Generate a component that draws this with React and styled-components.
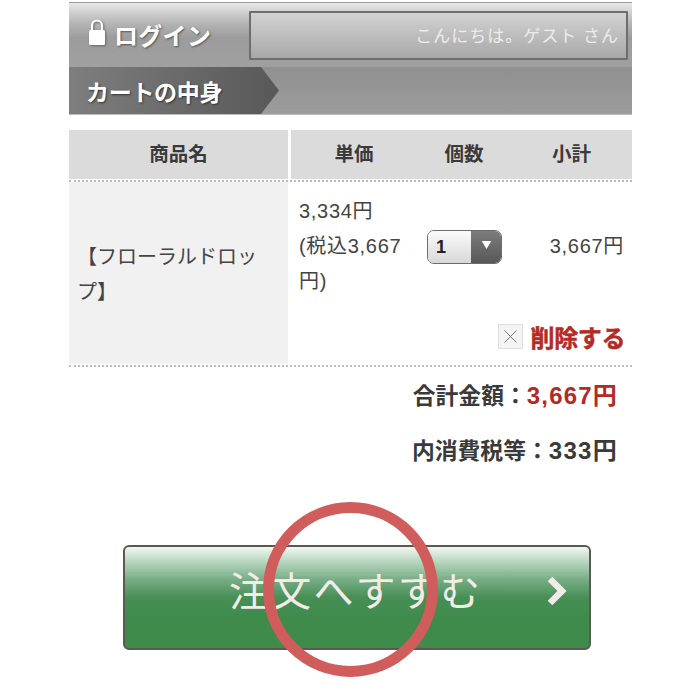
import React from "react";
import styled, { createGlobalStyle } from "styled-components";

const FONT = `"Liberation Sans", "Noto Sans CJK JP", sans-serif`;

const Global = createGlobalStyle`
  html, body { margin: 0; padding: 0; background: #fff; }
  body { font-family: ${FONT}; color: #3c3c3c; }
`;

const Page = styled.div`
  position: relative;
  width: 700px;
  height: 700px;
  overflow: hidden;
  padding: 2px 68px 0 69px;
  box-sizing: border-box;
`;

const LoginBar = styled.div`
  height: 65px;
  box-sizing: border-box;
  border-top: 1px solid #9a9a9a;
  background: linear-gradient(#e8e8e8 0%, #b4b4b4 32%, #9c9c9c 55%, #a0a0a0 100%);
  display: flex;
  align-items: flex-start;
  padding: 8px 4px 0 19px;
`;

const LoginLabel = styled.div`
  display: flex;
  align-items: center;
  gap: 8px;
  width: 161px;
  height: 46px;
  color: #fff;
  font-size: 24px;
  font-weight: 700;
  text-shadow: 1px 1px 2px #555;
  letter-spacing: 0.3px;
`;

const LockIcon = styled.svg`
  margin-top: -4px;
  filter: drop-shadow(1px 1px 1px #666);
`;

const Greeting = styled.div`
  flex: 1;
  height: 49px;
  box-sizing: border-box;
  border: 2px solid #6e6e6e;
  border-radius: 1px;
  background: linear-gradient(#d2d2d2, #a8a8a8);
  display: flex;
  align-items: center;
  justify-content: flex-end;
  padding: 0 7px 2px 0;
  color: #ececec;
  font-size: 17px;
  letter-spacing: 1px;
`;

const CrumbBar = styled.div`
  height: 48px;
  background: linear-gradient(#909090, #9c9c9c);
  border-bottom: 1px solid #bdbdbd;
  box-sizing: border-box;
`;

const Crumb = styled.div`
  width: 210px;
  height: 47px;
  box-sizing: border-box;
  padding-left: 17px;
  display: flex;
  align-items: center;
  color: #fff;
  font-size: 23px;
  font-weight: 700;
  letter-spacing: -0.3px;
  text-shadow: 1px 1px 2px #333;
  background: linear-gradient(90deg, #7e7e7e 0%, #585858 100%);
  clip-path: polygon(0 0, 192px 0, 100% 50%, 192px 100%, 0 100%);
`;

const Table = styled.div`
  margin-top: 15px;
  display: grid;
  grid-template-columns: 219px 3px 126px 94px 121px;
`;

const HeadCell = styled.div`
  height: 49px;
  box-sizing: border-box;
  padding-bottom: 4px;
  background: #dcdbdb;
  display: flex;
  align-items: center;
  justify-content: center;
  font-size: 19.5px;
  font-weight: 700;
  color: #3a3a3a;
`;

const HeadGap = styled.div`
  background: #fff;
`;

const Dots = styled.div`
  grid-column: 1 / -1;
  height: 3px;
  box-sizing: border-box;
  border-bottom: 2px dotted #bcbcbc;
`;

const NameCell = styled.div`
  grid-row: 3;
  grid-column: 1;
  height: 182px;
  background: #f1f1f1;
  box-sizing: border-box;
  padding: 58px 16px 0 8px;
  font-size: 20px;
  line-height: 35px;
  color: #444;
`;

const PriceCell = styled.div`
  grid-row: 3;
  grid-column: 3;
  box-sizing: border-box;
  padding: 12px 0 0 8px;
  font-size: 20px;
  letter-spacing: 0.7px;
  line-height: 35px;
  color: #444;
`;

const QtyCell = styled.div`
  grid-row: 3;
  grid-column: 4;
  padding: 48px 0 0 10px;
`;

const Select = styled.div`
  width: 75px;
  height: 34px;
  box-sizing: border-box;
  border: 1.5px solid #6c6c6c;
  border-radius: 7px;
  overflow: hidden;
  display: flex;
`;

const SelectValue = styled.div`
  flex: 1;
  background: linear-gradient(#fbfbfb, #d8d8d8);
  font-size: 18px;
  font-weight: 700;
  color: #222;
  display: flex;
  align-items: center;
  padding-left: 8px;
`;

const SelectArrow = styled.div`
  width: 30px;
  background: linear-gradient(#7c7c7c, #585858);
  display: flex;
  justify-content: center;
  padding-top: 9px;
  box-sizing: border-box;
`;

const TotalCell = styled.div`
  grid-row: 3;
  grid-column: 5;
  padding: 47px 8px 0 0;
  text-align: right;
  font-size: 20px;
  letter-spacing: 0.7px;
  line-height: 35px;
  color: #444;
`;

const RemoveRow = styled.div`
  grid-column: 3 / -1;
  grid-row: 3;
  align-self: end;
  justify-self: end;
  display: flex;
  align-items: center;
  gap: 8px;
  margin: 0 7px 10px 0;
  color: #b52a24;
  font-size: 24px;
  font-weight: 700;
  letter-spacing: -0.4px;
  -webkit-text-stroke: 0.5px #b52a24;
`;

const RemoveBox = styled.div`
  width: 25px;
  height: 25px;
  box-sizing: border-box;
  border: 1px solid #dedede;
  background: #f4f4f4;
  display: flex;
  align-items: center;
  justify-content: center;
`;

const Summary = styled.div`
  display: flex;
  flex-direction: column;
  align-items: flex-end;
  padding: 7px 14px 0 0;
`;

const SummaryLine = styled.div`
  height: 55px;
  line-height: 44px;
  font-size: 22.8px;
  font-weight: 700;
  color: #3a3a3a;
`;

const Amount = styled.span`
  color: ${(p) => (p.$red ? "#b52a24" : "#3a3a3a")};
  font-size: 24px;
  letter-spacing: ${(p) => (p.$red ? "1.2px" : "1.3px")};
`;

const OrderRow = styled.div`
  margin: 61px 0 0 54px;
  width: 468px;
`;

const OrderButton = styled.div`
  height: 105px;
  box-sizing: border-box;
  border: 2px solid #5a5a50;
  border-radius: 6px;
  background: linear-gradient(#f2f7f3 0%, #b9d7c1 14%, #77ae85 32%, #478f55 50%, #3e8b4c 70%, #3e8b4c 100%);
  display: flex;
  align-items: center;
  position: relative;
  padding: 0 0 17px 104px;
  color: #f3ebe8;
  font-size: 40px;
  letter-spacing: 2.2px;
  font-family: "Noto Sans CJK JP", sans-serif;
  font-weight: 400;
`;

const Chevron = styled.svg`
  position: absolute;
  right: 22px;
  top: 29px;
`;

const Ring = styled.div`
  position: absolute;
  left: 263px;
  top: 502px;
  width: 175px;
  height: 175px;
  box-sizing: border-box;
  border: 11px solid #d15c5c;
  border-radius: 50%;
`;

export default function App() {
  return (
    <Page>
      <Global />
      <LoginBar>
        <LoginLabel>
          <LockIcon width="18" height="27" viewBox="0 0 18 27">
            <path d="M4 13V6.5a5 5 0 0 1 10 0V13" fill="none" stroke="#fff" strokeWidth="2.2" />
            <rect x="1" y="11" width="16" height="15" rx="1.5" fill="#fff" />
          </LockIcon>
          ログイン
        </LoginLabel>
        <Greeting>こんにちは。ゲスト さん</Greeting>
      </LoginBar>
      <CrumbBar>
        <Crumb>カートの中身</Crumb>
      </CrumbBar>
      <Table>
        <HeadCell>商品名</HeadCell>
        <HeadGap />
        <HeadCell>単価</HeadCell>
        <HeadCell>個数</HeadCell>
        <HeadCell>小計</HeadCell>
        <Dots />
        <NameCell>【フローラルドロップ】</NameCell>
        <PriceCell>3,334円<br />(税込3,667円)</PriceCell>
        <QtyCell>
          <Select>
            <SelectValue>1</SelectValue>
            <SelectArrow>
              <svg width="11" height="10" viewBox="0 0 14 12">
                <path d="M1 1h12L7 11z" fill="#fff" />
              </svg>
            </SelectArrow>
          </Select>
        </QtyCell>
        <TotalCell>3,667円</TotalCell>
        <RemoveRow>
          <RemoveBox>
            <svg width="15" height="15" viewBox="0 0 15 15">
              <path d="M1.5 1.5l12 12M13.5 1.5l-12 12" stroke="#777" strokeWidth="1" fill="none" />
            </svg>
          </RemoveBox>
          削除する
        </RemoveRow>
        <Dots />
      </Table>
      <Summary>
        <SummaryLine>合計金額：<Amount $red>3,667円</Amount></SummaryLine>
        <SummaryLine>内消費税等：<Amount>333円</Amount></SummaryLine>
      </Summary>
      <OrderRow>
        <OrderButton>
          注文へすすむ
          <Chevron width="20" height="30" viewBox="0 0 20 30">
            <path d="M3 3l12 12L3 27" fill="none" stroke="#f3ebe8" strokeWidth="6.5" />
          </Chevron>
        </OrderButton>
      </OrderRow>
      <Ring />
    </Page>
  );
}
